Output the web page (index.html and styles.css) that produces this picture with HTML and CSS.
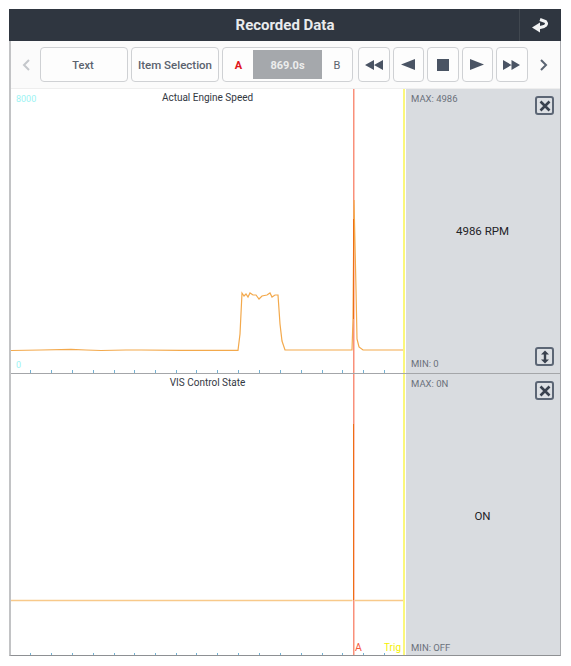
FILE: index.html
```html
<!DOCTYPE html>
<html lang="en">
<head>
<meta charset="utf-8">
<title>Recorded Data</title>
<link rel="stylesheet" href="styles.css">
</head>
<body>
<main class="app">
  <header class="header">
    <h1 class="title">Recorded Data</h1>
    <button class="back" aria-label="Back">
      <svg width="17" height="15" viewBox="0 0 17 15"><path d="M0 9.500 L8 4.500 V14.500 Z" fill="#f2f3f4"/><path d="M8 1.500 L13.500 3.500 Q16 6.500 12 8.500 L6 10" fill="none" stroke="#f2f3f4" stroke-width="3"/></svg>
    </button>
  </header>
  <nav class="toolbar">
    <svg class="chev" width="8" height="12" viewBox="0 0 8 12"><path d="M7 1 L2 6 L7 11" fill="none" stroke="#c4c7cb" stroke-width="2"/></svg>
    <button class="btn btn-text">Text</button>
    <button class="btn btn-item">Item Selection</button>
    <div class="btn range">
      <span class="range-a">A</span>
      <span class="range-time">869.0s</span>
      <span class="range-b">B</span>
    </div>
    <div class="transport">
      <button class="btn btn-icon" aria-label="Rewind"><svg width="18" height="10" viewBox="0 0 18 10"><path d="M9 0 V10 L0 5 Z M18 0 V10 L9 5 Z" fill="#4a5464"/></svg></button>
      <button class="btn btn-icon" aria-label="Step back"><svg width="14" height="11" viewBox="0 0 14 11"><path d="M14 0 V11 L0 5.500 Z" fill="#4a5464"/></svg></button>
      <button class="btn btn-icon" aria-label="Stop"><svg width="12" height="12" viewBox="0 0 12 12"><rect width="12" height="12" fill="#4a5464"/></svg></button>
      <button class="btn btn-icon" aria-label="Step forward"><svg width="14" height="11" viewBox="0 0 14 11"><path d="M0 0 V11 L14 5.500 Z" fill="#4a5464"/></svg></button>
      <button class="btn btn-icon" aria-label="Fast forward"><svg width="17" height="10" viewBox="0 0 17 10"><path d="M0 0 V10 L8.500 5 Z M8.500 0 V10 L17 5 Z" fill="#4a5464"/></svg></button>
    </div>
    <svg class="chev chev-right" width="8" height="12" viewBox="0 0 8 12"><path d="M1 1 L6 6 L1 11" fill="none" stroke="#5a6472" stroke-width="2"/></svg>
  </nav>

  <section class="row row-1">
    <div class="plot">
      <div class="chart-title">Actual Engine Speed</div>
      <span class="scale scale-top">8000</span>
      <span class="scale scale-bottom">0</span>
      <svg class="graph" width="395" height="284" viewBox="0 0 395 284">
        <path class="ticks" d="M19.500 281v3M40.500 281v3M61.500 281v3M82.500 281v3M103.500 281v3M123.500 281v3M144.500 281v3M165.500 281v3M185.500 281v3M206.500 281v3M227.500 281v3M248.500 281v3M269.500 281v3M290.500 281v3M311.500 281v3M331.500 281v3M352.500 281v3M373.500 281v3"/>
        <path class="cursor-a" d="M342.750 0V284"/>
        <path class="cursor-trig" d="M393 0V284"/>
        <path class="signal" d="M0 261.500 L30 261 L60 260.300 L75 261 L90 261.500 L115 261 L130 261 L170 261.300 L227 261.300 L229 245 L231 204 L233 207 L235 205 L237 208 L239 204 L242 206 L245 206 L248 210 L251 207 L256 206 L259 204 L261 208 L264 206 L267 206 L269 235 L271 252 L274 261 L300 261 L341 261 L342 230 L343 111 L345 200 L346 250 L348 258 L352 261 L392 261"/>
        <path class="spike" d="M342.500 130V230"/>
      </svg>
    </div>
    <aside class="panel">
      <div class="panel-top">
        <span class="stat">MAX: 4986</span>
        <button class="icon-box" aria-label="Close"><svg width="12" height="12" viewBox="0 0 12 12"><path d="M1.500 1.500 L10.500 10.500 M10.500 1.500 L1.500 10.500" stroke="#39414e" stroke-width="2.600"/></svg></button>
      </div>
      <div class="value">4986 RPM</div>
      <div class="panel-bottom">
        <span class="stat">MIN: 0</span>
        <button class="icon-box" aria-label="Resize"><svg width="10" height="14" viewBox="0 0 10 14"><path d="M5 0.500 L9 4.500 H6.200 V9.500 H9 L5 13.500 L1 9.500 H3.800 V4.500 H1 Z" fill="#39414e"/></svg></button>
      </div>
    </aside>
  </section>

  <section class="row row-2">
    <div class="plot">
      <div class="chart-title">VIS Control State</div>
      <span class="marker marker-a">A</span>
      <span class="marker marker-trig">Trig</span>
      <svg class="graph" width="395" height="281" viewBox="0 0 395 281">
        <path class="ticks" d="M19.500 279v2M40.500 279v2M61.500 279v2M82.500 279v2M103.500 279v2M123.500 279v2M144.500 279v2M165.500 279v2M185.500 279v2M206.500 279v2M227.500 279v2M248.500 279v2M269.500 279v2M290.500 279v2M311.500 279v2M331.500 279v2M352.500 279v2M373.500 279v2"/>
        <path class="cursor-a" d="M342.750 0V281"/>
        <path class="cursor-trig" d="M393 0V281"/>
        <path class="signal signal-flat" d="M0 226.500 H341.500 M343.500 226.500 H392"/>
        <path class="spike" d="M342.500 50V226"/>
      </svg>
    </div>
    <aside class="panel">
      <div class="panel-top">
        <span class="stat">MAX: 0N</span>
        <button class="icon-box" aria-label="Close"><svg width="12" height="12" viewBox="0 0 12 12"><path d="M1.500 1.500 L10.500 10.500 M10.500 1.500 L1.500 10.500" stroke="#39414e" stroke-width="2.600"/></svg></button>
      </div>
      <div class="value">ON</div>
      <div class="panel-bottom">
        <span class="stat">MIN: OFF</span>
      </div>
    </aside>
  </section>
</main>
</body>
</html>
```
FILE: styles.css
```css
* { box-sizing: border-box; }
html, body { margin: 0; background: #fff; }
body { width: 571px; height: 666px; overflow: hidden; font-family: Roboto, "Liberation Sans", sans-serif; }
button { font-family: inherit; padding: 0; }

.app {
  width: 552px;
  margin: 9px 0 0 9px;
  border-left: 2px solid #c2c3c5;
  border-right: 1px solid #a9abae;
  border-bottom: 1px solid #8e9093;
  display: flex;
  flex-direction: column;
}

.header {
  height: 32px;
  margin: 0 -1px 0 -2px;
  background: #2f3640;
  display: flex;
  align-items: center;
  justify-content: center;
  position: relative;
}
.title { margin: 0; font-size: 15px; font-weight: 700; color: #e9ebed; }
.back {
  position: absolute;
  right: 0;
  top: 0;
  width: 42px;
  height: 32px;
  background: none;
  border: 0;
  border-left: 1px solid #40474f;
  display: flex;
  align-items: center;
  justify-content: center;
}

.toolbar {
  height: 48px;
  background: #fbfbfb;
  border-bottom: 1px solid #eeeeee;
  display: flex;
  align-items: center;
  padding: 0 0 0 11px;
}
.chev { flex: none; }
.chev-right { margin-left: 12px; }
.btn {
  height: 35px;
  background: #fdfdfd;
  border: 1px solid #cfd1d4;
  border-radius: 4px;
  color: #5a626e;
  font-size: 11px;
  font-weight: 500;
  display: flex;
  align-items: center;
  justify-content: center;
}
.btn-text { width: 88px; margin-left: 10px; padding: 1px 2px 0 0; }
.btn-item { width: 88px; margin-left: 3px; padding-top: 1px; font-size: 11.500px; }
.range { width: 131px; margin-left: 3px; padding: 0; justify-content: flex-start; }
.range-a { width: 30px; padding: 1px 0 0 1px; text-align: center; color: #e0141c; font-weight: 700; font-size: 11px; }
.range-time {
  width: 69px;
  height: 29px;
  padding-top: 1px;
  background: #a5a8ac;
  color: #eceded;
  font-weight: 700;
  display: flex;
  align-items: center;
  justify-content: center;
}
.range-b { flex: 1; padding-top: 1px; text-align: center; color: #5a626e; font-weight: 400; }
.transport { display: flex; gap: 3px; margin-left: 5px; }
.btn-icon { width: 31.500px; }

.row { display: flex; }
.row-1 { height: 285px; border-bottom: 1px solid #a4a6a9; }
.row-2 { height: 281px; }

.plot { width: 395px; position: relative; background: #fff; }
.graph { display: block; position: absolute; left: 0; top: 0; }
.chart-title {
  position: relative;
  z-index: 1;
  text-align: center;
  font-size: 10px;
  line-height: 11px;
  padding: 3px 2px 0 0;
  color: #33383f;
}
.scale { position: absolute; left: 5px; font-size: 9px; line-height: 10px; color: #9cf3f3; }
.scale-top { top: 5px; }
.scale-bottom { top: 271px; }
.marker { position: absolute; top: 268px; font-size: 10.500px; line-height: 12px; }
.marker-a { left: 344px; color: #f4593c; }
.marker-trig { left: 373px; font-size: 10px; color: #f5f000; }

.ticks { stroke: #74b1d2; stroke-width: 1; fill: none; }
.signal { stroke: #f3a94c; stroke-width: 1.200; fill: none; }
.signal-flat { stroke: #f8c98a; stroke-width: 1.600; }
.spike { stroke: #ee6f14; stroke-width: 1; }
.cursor-a { stroke: #f9907a; stroke-width: 1.500; }
.cursor-trig { stroke: #fbf77c; stroke-width: 2; }

.panel {
  flex: 1;
  background: #d9dce0;
  padding: 4px 6px 4px 5px;
  display: flex;
  flex-direction: column;
}
.row-2 .panel { padding-bottom: 2px; }
.panel-top, .panel-bottom { display: flex; justify-content: space-between; min-height: 22px; }
.panel-top { align-items: flex-start; }
.panel-bottom { align-items: flex-end; }
.stat { font-size: 9.500px; line-height: 11px; color: #6b717b; }
.value {
  flex: 1;
  display: flex;
  align-items: center;
  justify-content: center;
  font-size: 11.500px;
  color: #1f2328;
}
.icon-box {
  width: 19px;
  height: 19px;
  margin-top: 3px;
  background: #dde0e4;
  border: 2px solid #5c6675;
  border-radius: 3px;
  display: flex;
  align-items: center;
  justify-content: center;
}
.panel-bottom .icon-box { margin: 0 0 3px; }
```
